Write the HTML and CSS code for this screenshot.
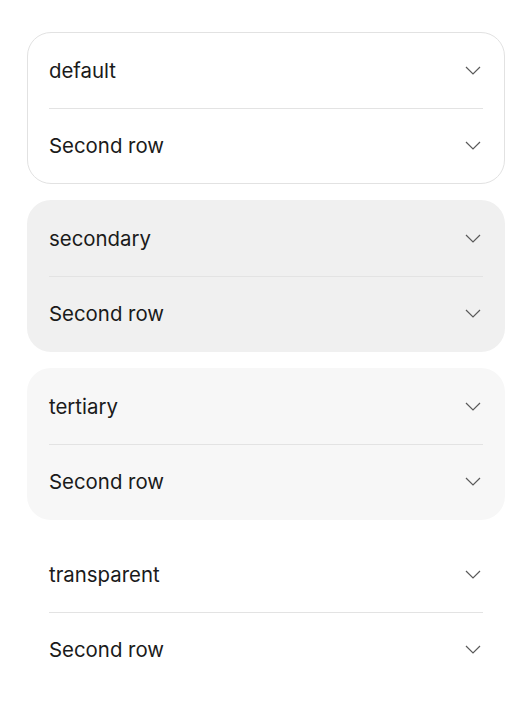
FILE: index.html
```html
<!DOCTYPE html>
<html>
<head>
  <title>Accordion variants</title>
  <link rel="stylesheet" href="styles.css">
</head>
<body>
  <div class="stack">
    <div class="accordion default">
      <div class="acc-row"><span>default</span><svg class="chev" viewBox="0 0 16 9"><path d="M1 1l7 7 7-7"/></svg></div>
      <div class="acc-row"><span>Second row</span><svg class="chev" viewBox="0 0 16 9"><path d="M1 1l7 7 7-7"/></svg></div>
    </div>
    <div class="accordion secondary">
      <div class="acc-row"><span>secondary</span><svg class="chev" viewBox="0 0 16 9"><path d="M1 1l7 7 7-7"/></svg></div>
      <div class="acc-row"><span>Second row</span><svg class="chev" viewBox="0 0 16 9"><path d="M1 1l7 7 7-7"/></svg></div>
    </div>
    <div class="accordion tertiary">
      <div class="acc-row"><span>tertiary</span><svg class="chev" viewBox="0 0 16 9"><path d="M1 1l7 7 7-7"/></svg></div>
      <div class="acc-row"><span>Second row</span><svg class="chev" viewBox="0 0 16 9"><path d="M1 1l7 7 7-7"/></svg></div>
    </div>
    <div class="accordion transparent">
      <div class="acc-row"><span>transparent</span><svg class="chev" viewBox="0 0 16 9"><path d="M1 1l7 7 7-7"/></svg></div>
      <div class="acc-row"><span>Second row</span><svg class="chev" viewBox="0 0 16 9"><path d="M1 1l7 7 7-7"/></svg></div>
    </div>
  </div>
</body>
</html>
```
FILE: styles.css
```css
body {
  margin: 0;
  font-family: Inter, "Noto Sans", sans-serif;
  background: #fff;
  color: #1a1a1a;
}
.stack {
  display: flex;
  flex-direction: column;
  gap: 16px;
  padding: 32px 27px;
}
.accordion {
  border: 1px solid transparent;
  border-radius: 24px;
  padding: 0 21px;
}
.default {
  border-color: #e2e2e2;
}
.secondary {
  background: #f0f0f0;
}
.tertiary {
  background: #f7f7f7;
}
.acc-row {
  height: 74.5px;
  display: flex;
  align-items: center;
  justify-content: space-between;
  font-size: 20.4px;
}
.acc-row + .acc-row {
  border-top: 1px solid #e3e3e3;
}
.chev {
  width: 16px;
  height: 9px;
  margin-right: 2px;
  fill: none;
  stroke: #5a5a5a;
  stroke-width: 1.2;
}
```
